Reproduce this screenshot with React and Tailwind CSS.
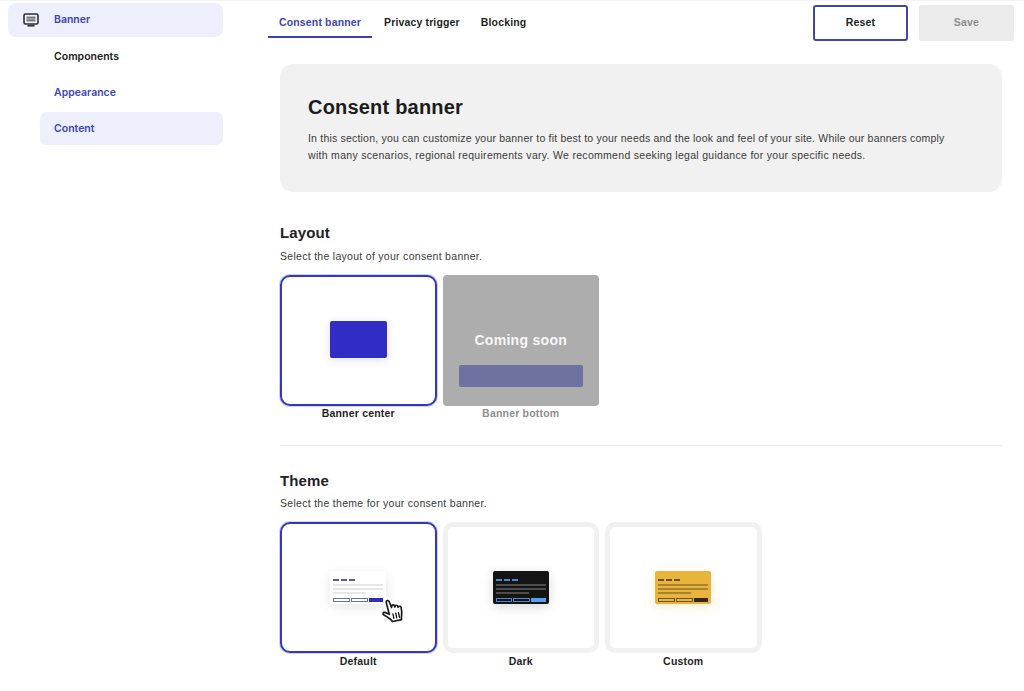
const BLUE = "text-[#3d45b5]";

function MiniBanner({ bg, dash, line, outline, solid, shadow }) {
  return (
    <div className={`w-[56px] h-[33.5px] rounded-[2px] px-[3px] pt-[8px] flex flex-col ${bg} ${shadow}`}>
      <div className="flex gap-[2px]">
        <div className={`w-[6px] h-[2px] ${dash}`} />
        <div className={`w-[6px] h-[2px] ${dash}`} />
        <div className={`w-[6px] h-[2px] ${dash}`} />
      </div>
      <div className="flex flex-col gap-[2px] mt-[3px]">
        <div className={`h-[2px] w-full ${line}`} />
        <div className={`h-[2px] w-full ${line}`} />
        <div className={`h-[2px] w-[33px] ${line}`} />
      </div>
      <div className="flex gap-[1px] mt-[4px]">
        <div className={`h-[4.500px] flex-1 border ${outline}`} />
        <div className={`h-[4.500px] flex-1 border ${outline}`} />
        <div className={`h-[4.500px] flex-1 ${solid}`} />
      </div>
    </div>
  );
}

function Hand() {
  return (
    <svg width="26" height="27" viewBox="0 0 24 26" className="absolute left-[99px] top-[74px] -rotate-12">
      <path
        d="M6.500 2.600c0-1.600 2.600-1.700 2.900 0l1.100 6.200 .4-1.400c.5-1.300 2.400-1 2.600.3l.2 1.300 .5-.9c.7-1 2.300-.6 2.400.7l.1.900 .6-.4c1-.5 2.200.2 2.200 1.400 0 3-.3 5.500-1.200 7.700-.5 1.300-.8 2.500-.8 3.800H8.700c-.6-2-2.100-3.400-4-5.200L1.600 14c-.9-1 .2-2.600 1.600-2l3.800 2.700L6.500 2.600z"
        fill="#ffffff"
        stroke="#1a1a1a"
        strokeWidth="1.600"
        strokeLinejoin="round"
      />
      <path d="M10.500 15v4.500M13.300 15v4.500M16 15v4.500" stroke="#1a1a1a" strokeWidth="1.300" strokeLinecap="round" fill="none" />
    </svg>
  );
}

function Option({ label, selected, children, labelClass = "" }) {
  return (
    <div className="w-[156.500px] flex flex-col items-center">
      <div
        className={`relative w-full h-[131px] rounded-[10px] bg-white flex items-center justify-center ${
          selected ? "border-2 border-[#3238c0] shadow-[0_0_0_1px_rgba(58,66,184,0.25)]" : "border-[5px] border-[#f1f1f1]"
        }`}
      >
        {children}
      </div>
      <div className={`text-[10.500px] leading-[14px] font-bold tracking-[0.2px] text-[#1f1f1f] ${labelClass}`}>{label}</div>
    </div>
  );
}

export default function App() {
  return (
    <div className="w-[1024px] h-[691px] overflow-hidden bg-white flex border-t border-[#f4f4f4] font-['Liberation_Sans',sans-serif] text-[#1f1f1f]">
      <aside className="w-[268px] shrink-0 pl-[8px] pr-[45px] pt-[2px] font-['Inter',sans-serif] text-[10.500px] font-semibold">
        <div className="h-[34px] rounded-[8px] bg-[#eeeffc] flex items-center">
          <svg width="16" height="14" viewBox="0 0 16 14" className="ml-[15px] mb-[1px]">
            <rect x="1" y="1" width="14" height="10" rx="1.500" fill="none" stroke="#2f2f35" strokeWidth="1.600" />
            <path d="M3.500 4.200h9M3.500 6h9M3.500 7.800h9" stroke="#2f2f35" strokeWidth="0.900" />
            <path d="M4.500 12.700h7" stroke="#2f2f35" strokeWidth="1.700" />
          </svg>
          <span className={`ml-[15px] ${BLUE}`}>Banner</span>
        </div>
        <div className="pl-[46px] mt-[13px] leading-[14px] text-[#222222]">Components</div>
        <div className={`pl-[46px] mt-[22px] leading-[14px] ${BLUE}`}>Appearance</div>
        <div className={`ml-[32px] mt-[12px] h-[33px] rounded-[7px] bg-[#eeeffc] flex items-center pl-[14px] ${BLUE}`}>Content</div>
      </aside>

      <main className="flex-1 min-w-0 pr-[10px]">
        <div className="flex items-start justify-between h-[63px]">
          <div className="flex pt-[9px] text-[10.500px] font-bold tracking-[0.15px]">
            <div className={`w-[104px] h-[28px] border-b-2 border-[#3a42b8] pl-[11px] pt-[5px] leading-[14px] ${BLUE}`}>Consent banner</div>
            <div className="ml-[12px] pt-[5px] leading-[14px]">Privacy trigger</div>
            <div className="ml-[21px] pt-[5px] leading-[14px]">Blocking</div>
          </div>
          <div className="flex gap-[11px] pt-[4px] text-[10.500px] font-bold tracking-[0.2px]">
            <button className="w-[95px] h-[36px] rounded-[3px] border-2 border-[#3f47ad] bg-white text-[#222222]">Reset</button>
            <button className="w-[95px] h-[36px] rounded-[3px] bg-[#ebebeb] text-[#8e8e8e]">Save</button>
          </div>
        </div>

        <div className="ml-[12px] w-[722px]">
          <section className="h-[128px] rounded-[13px] bg-[#f1f1f1] pl-[28px] pr-[30px] pt-[30px]">
            <h1 className="text-[20px] leading-[26px] font-bold tracking-[0.2px] text-[#1c1c1c]">Consent banner</h1>
            <p className="mt-[10px] text-[10.500px] leading-[17px] text-[#3a3a3a]">
              <span className="block tracking-[0.2px] whitespace-nowrap">In this section, you can customize your banner to fit best to your needs and the look and feel of your site. While our banners comply</span>
              <span className="block tracking-[0.3px] whitespace-nowrap">with many scenarios, regional requirements vary. We recommend seeking legal guidance for your specific needs.</span>
            </p>
          </section>

          <h2 className="mt-[31px] text-[15px] leading-[20px] font-bold tracking-[0.1px] text-[#222222]">Layout</h2>
          <p className="mt-[6px] text-[10.500px] leading-[14px] tracking-[0.29px] text-[#3a3a3a]">Select the layout of your consent banner.</p>
          <div className="mt-[12px] flex gap-[6px]">
            <Option label="Banner center" selected>
              <div className="w-[57px] h-[37px] mb-[2px] rounded-[2px] bg-[#302cc4] shadow-[0_2px_10px_rgba(48,44,196,0.15)]" />
            </Option>
            <div className="w-[156.500px] flex flex-col items-center">
              <div className="w-full h-[131px] rounded-[4px] bg-[#adadad] flex flex-col items-center pt-[56px]">
                <div className="text-[14px] leading-[18px] font-bold tracking-[0.3px] text-[#f7f7f7]">Coming soon</div>
                <div className="mt-[16px] w-[124px] h-[22px] rounded-[2px] bg-[#6e72a0]" />
              </div>
              <div className="text-[10.500px] leading-[14px] font-bold tracking-[0.2px] text-[#8f8f8f]">Banner bottom</div>
            </div>
          </div>

          <hr className="mt-[25px] border-t border-[#ededed]" />

          <h2 className="mt-[25px] text-[15px] leading-[20px] font-bold tracking-[0.1px] text-[#222222]">Theme</h2>
          <p className="mt-[5px] text-[10.500px] leading-[14px] tracking-[0.29px] text-[#3a3a3a]">Select the theme for your consent banner.</p>
          <div className="mt-[12px] flex gap-[6px]">
            <Option label="Default" selected labelClass="mt-px">
              <MiniBanner
                bg="bg-white"
                shadow="shadow-[0_3px_12px_rgba(0,0,0,0.1)]"
                dash="bg-[#565aa8]"
                line="bg-[#e6e6e6]"
                outline="border-[#6a70b5]"
                solid="bg-[#302cc4]"
              />
              <Hand />
            </Option>
            <Option label="Dark" labelClass="mt-px">
              <MiniBanner
                bg="bg-[#141414]"
                shadow="shadow-[0_3px_12px_rgba(0,0,0,0.15)]"
                dash="bg-[#4d86c9]"
                line="bg-[#4d4d4d]"
                outline="border-[#4d86c9]"
                solid="bg-[#54a2ee]"
              />
            </Option>
            <Option label="Custom" labelClass="mt-px">
              <MiniBanner
                bg="bg-[#e8b43c]"
                shadow="shadow-[0_3px_12px_rgba(232,180,60,0.25)]"
                dash="bg-[#6b5320]"
                line="bg-[#a98430]"
                outline="border-[#6b5320]"
                solid="bg-[#33291a]"
              />
            </Option>
          </div>
        </div>
      </main>
    </div>
  );
}
